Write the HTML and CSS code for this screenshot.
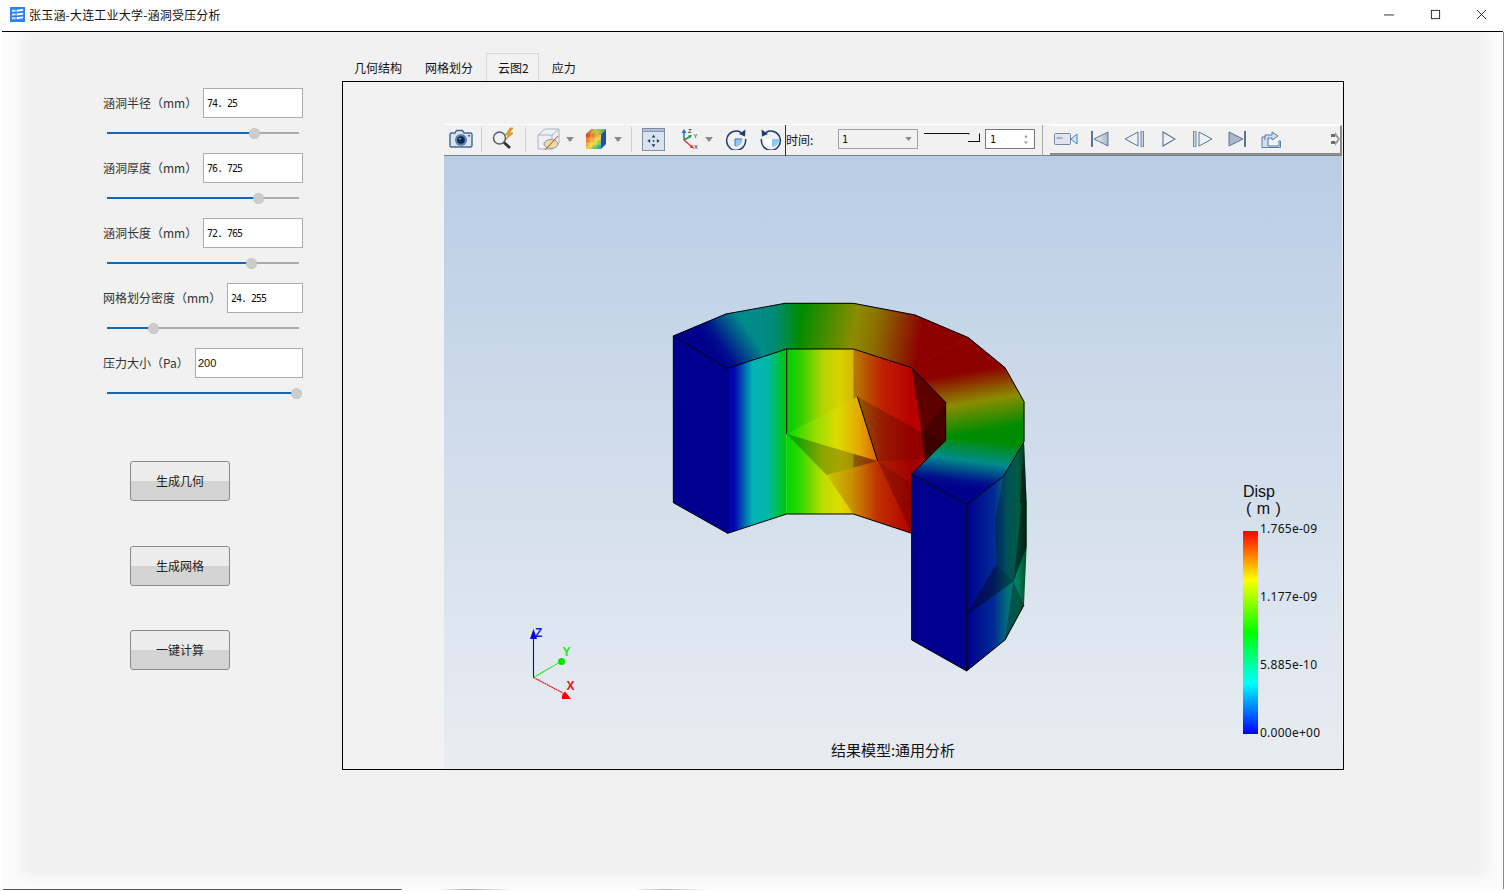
FILE: index.html
```html
<!DOCTYPE html>
<html lang="zh-CN">
<head>
<meta charset="utf-8">
<title>张玉涵-大连工业大学-涵洞受压分析</title>
<link rel="stylesheet" href="styles.css">
</head>
<body>
<div class="window">
  <header class="titlebar">
    <svg class="app-icon" viewBox="0 0 16 16"><rect width="16" height="16" fill="#2f80e8"/><path d="M2 3h4v2H2zM2 7h4v2H2zM2 11h4v2H2z" fill="#cfe3fb"/><path d="M7 3l7-1v2l-7 1zM7 7l7-1v2l-7 1zM7 11l7-1v2l-7 1z" fill="#fff"/></svg>
    <span class="title-text">张玉涵-大连工业大学-涵洞受压分析</span>
    <div class="win-controls">
      <svg class="wc wc-min" viewBox="0 0 12 12"><path d="M0 6.5h11" stroke="#222" fill="none"/></svg>
      <svg class="wc wc-max" viewBox="0 0 12 12"><rect x="1.5" y="1.5" width="9" height="9" stroke="#222" fill="none"/></svg>
      <svg class="wc wc-close" viewBox="0 0 12 12"><path d="M1 1l10 10M11 1L1 11" stroke="#222" fill="none"/></svg>
    </div>
  </header>

  <main class="main">
    <aside class="controls">
      <div class="field">
        <div class="field-row"><label class="field-label">涵洞半径（mm）</label><input class="num w100" value="74. 25"></div>
        <div class="slider"><span class="fill" style="width:147px"></span><span class="knob"></span><span class="rest"></span></div>
      </div>
      <div class="field">
        <div class="field-row"><label class="field-label">涵洞厚度（mm）</label><input class="num w100" value="76. 725"></div>
        <div class="slider"><span class="fill" style="width:151px"></span><span class="knob"></span><span class="rest"></span></div>
      </div>
      <div class="field">
        <div class="field-row"><label class="field-label">涵洞长度（mm）</label><input class="num w100" value="72. 765"></div>
        <div class="slider"><span class="fill" style="width:144px"></span><span class="knob"></span><span class="rest"></span></div>
      </div>
      <div class="field">
        <div class="field-row"><label class="field-label">网格划分密度（mm）</label><input class="num w76" value="24. 255"></div>
        <div class="slider"><span class="fill" style="width:46px"></span><span class="knob"></span><span class="rest"></span></div>
      </div>
      <div class="field">
        <div class="field-row"><label class="field-label">压力大小（Pa）</label><input class="num w108 plain" value="200"></div>
        <div class="slider"><span class="fill" style="width:189px"></span><span class="knob"></span><span class="rest"></span></div>
      </div>
      <div class="actions">
        <button class="btn">生成几何</button>
        <button class="btn">生成网格</button>
        <button class="btn">一键计算</button>
      </div>
    </aside>

    <section class="workspace">
      <nav class="tabs">
        <span class="tab">几何结构</span>
        <span class="tab">网格划分</span>
        <span class="tab active">云图2</span>
        <span class="tab">应力</span>
      </nav>
      <div class="pane">
        <div class="viewer">
          <div class="toolbar">
            <div class="tb-main">
              <svg class="ic i-camera" viewBox="0 0 24 20"><path d="M1 5.500q0-1.500 1.500-1.500H6l1.500-2.500h6L15 4h6.500Q23 4 23 5.500v11q0 1.500-1.500 1.500h-19Q1 18 1 16.500z" fill="#dbe3ee" stroke="#48658f" stroke-width="1.400"/><circle cx="12" cy="11" r="6" fill="#5d7fb0"/><circle cx="12" cy="11" r="3.800" fill="#0e2a55"/><circle cx="10.800" cy="9.800" r="1" fill="#7fa0cf"/><rect x="19" y="6" width="2" height="1.500" fill="#3b557e"/></svg>
              <span class="sep s1"></span>
              <svg class="ic i-zoom" viewBox="0 0 24 24"><path d="M18 1l-4.500 7h3l-2.500 4.500 7-6.500h-3.500l3.500-5z" fill="#eca12b" stroke="#c47a10" stroke-width=".6"/><circle cx="7.500" cy="11" r="6" fill="#eef2f6" stroke="#5a5f66" stroke-width="1.500"/><path d="M12 15.500l6 5.500" stroke="#333" stroke-width="2.800"/></svg>
              <span class="sep s2"></span>
              <svg class="ic i-cube" viewBox="0 0 24 24"><path d="M1 8l7-6h14v14l-7 6H1z" fill="#eef0f4" stroke="#aab4c4"/><path d="M1 8h14v14M15 8l7-6" fill="none" stroke="#aab4c4"/><ellipse cx="14" cy="17" rx="7" ry="4.500" fill="#e8dca8" stroke="#8c96a8"/><path d="M8 23L21 9" stroke="#cf5a2a" stroke-width="1.100"/></svg>
              <svg class="arrow a1" viewBox="0 0 8 5"><path d="M0 0h8L4 5z" fill="#8a8a8a"/></svg>
              <svg class="ic i-colors" viewBox="0 0 22 22"><defs><linearGradient id="cubeFace" x1="1" x2="14" y1="6" y2="21" gradientUnits="userSpaceOnUse"><stop offset="0" stop-color="#d8302a"/><stop offset=".35" stop-color="#f09030"/><stop offset=".6" stop-color="#f0d838"/><stop offset=".85" stop-color="#50c060"/><stop offset="1" stop-color="#30a0d0"/></linearGradient><linearGradient id="cubeTop" x1="1" x2="21" y1="6" y2="2" gradientUnits="userSpaceOnUse"><stop offset="0" stop-color="#c85a30"/><stop offset=".5" stop-color="#c8c040"/><stop offset="1" stop-color="#50b050"/></linearGradient></defs><path d="M21 1v15l-5 5V6z" fill="#1f4fb0"/><path d="M1 6h15v15H1z" fill="url(#cubeFace)"/><path d="M1 6l5-5h15l-5 5z" fill="url(#cubeTop)"/><path d="M6 6v15M11 6v15M1 11h15M1 16h15M6 6l5-5M11 6l5-5" stroke="#f4f0d8" stroke-width=".5" opacity=".7"/></svg>
              <svg class="arrow a2" viewBox="0 0 8 5"><path d="M0 0h8L4 5z" fill="#8a8a8a"/></svg>
              <span class="sep s3"></span>
              <svg class="ic i-fit" viewBox="0 0 24 24"><rect x=".5" y=".5" width="23" height="23" fill="#d9e2ee" stroke="#7b8ba5"/><rect x=".5" y=".5" width="23" height="3" fill="#b3c2d8" stroke="#7b8ba5"/><path d="M12 7l-2 3h4zM12 20l-2-3h4zM5.500 13.500l3-2v4zM18.500 13.500l-3-2v4z" fill="#1f3d6e"/><circle cx="12" cy="13.500" r=".9" fill="#1f3d6e"/></svg>
              <svg class="ic i-axes" viewBox="0 0 22 24"><path d="M5 13V4" stroke="#2a6fc0" stroke-width="1.500"/><path d="M5 2l-2.500 4h5z" fill="#2a6fc0"/><path d="M5 13l7-4" stroke="#1f9a4a" stroke-width="1.500"/><path d="M13 8l-4 .5 1.800 3z" fill="#1f9a4a"/><path d="M5 13l8 7" stroke="#e03a3a" stroke-width="1.500"/><path d="M15 21.500l-4.300-1 2.300-3z" fill="#e03a3a"/><text x="9" y="5.500" class="axt">Z</text><text x="14.500" y="11" class="axt">Y</text><text x="15" y="21.500" class="axt">X</text></svg>
              <svg class="arrow a3" viewBox="0 0 8 5"><path d="M0 0h8L4 5z" fill="#8a8a8a"/></svg>
              <svg class="ic i-rot1" viewBox="0 0 22 22"><path d="M10 11h7.500A8 8 0 0 1 10 19z" fill="#8fc8ef"/><path d="M16 4.500A9.500 9.500 0 1 0 20.500 11" fill="none" stroke="#1f3d6e" stroke-width="1.500"/><path d="M20.500 1.500l-.5 7-6-2.500z" fill="#1f3d6e"/><path d="M10 11h7M10 11v7" stroke="#2f7fc0"/></svg>
              <svg class="ic i-rot2" viewBox="0 0 22 22"><path d="M12 11H4.500A8 8 0 0 0 12 19z" fill="#fff"/><path d="M12 11h7.500A8 8 0 0 1 12 19z" fill="#8fc8ef"/><path d="M6 4.500A9.500 9.500 0 1 1 1.500 11" fill="none" stroke="#1f3d6e" stroke-width="1.500"/><path d="M1.500 1.500l.5 7 6-2.500z" fill="#1f3d6e"/></svg>
              <span class="vline"></span>
              <span class="time-label">时间:</span>
              <div class="combo"><span>1</span><svg class="combo-arrow" viewBox="0 0 8 5"><path d="M0 0h8L4 5z" fill="#8a8a8a"/></svg></div>
              <svg class="tslider" viewBox="0 0 56 12"><path d="M0 3.500h45M45 3.500v1M55.500 3.500v8M44 11.500h12" stroke="#111" fill="none"/></svg>
              <div class="spin"><span>1</span><svg class="spin-arrows" viewBox="0 0 6 11"><path d="M3 1l2 2.500H1zM3 10L1 7.500h4z" fill="#999"/></svg></div>
              <span class="sep s4"></span>
            </div>
            <div class="tb-play">
              <svg class="pi p-video" viewBox="0 0 24 14"><rect x=".5" y="1.500" width="16" height="11" rx="1" fill="#dfe5ee" stroke="#7489a8"/><rect x="2.500" y="5" width="6" height="2" fill="#a4b2c6"/><path d="M17 7l6-5v10z" fill="#d8e4f2" stroke="#3a84c4"/></svg>
              <svg class="pi p-first" viewBox="0 0 18 16"><defs><linearGradient id="ctrlGrad"><stop offset="0" stop-color="#f0f3f7"/><stop offset="1" stop-color="#aab7c9"/></linearGradient></defs><path d="M1 0v16" stroke="#5a7298" stroke-width="2"/><path d="M17 1v14L3 8z" fill="url(#ctrlGrad)" stroke="#5a7298"/></svg>
              <svg class="pi p-prev" viewBox="0 0 20 16"><path d="M14 1v14L1 8z" fill="#eef1f5" stroke="#5a7298"/><path d="M17 0h2.500v16H17z" fill="#c8d2e0" stroke="#5a7298" stroke-width=".8"/></svg>
              <svg class="pi p-play" viewBox="0 0 14 16"><path d="M1 1v14l12-7z" fill="#eef2f7" stroke="#5a7298" stroke-width="1.100"/></svg>
              <svg class="pi p-next" viewBox="0 0 20 16"><path d="M6 1v14l13-7z" fill="#eef1f5" stroke="#5a7298"/><path d="M.5 0H3v16H.5z" fill="#c8d2e0" stroke="#5a7298" stroke-width=".8"/></svg>
              <svg class="pi p-last" viewBox="0 0 18 16"><path d="M1 1v14l14-7z" fill="#aab7c9" stroke="#5a7298"/><path d="M17 0v16" stroke="#5a7298" stroke-width="2"/></svg>
              <svg class="pi p-export" viewBox="0 0 20 17"><path d="M1 6h6v9h11v-5h1.500v6.500H1z" fill="#d4deea" stroke="#5a7bab"/><path d="M4 9V4h7V1l6 4-6 4V7H7v2" fill="#cfdcee" stroke="#5a7bab"/></svg>
              <svg class="handle" viewBox="0 0 9 16"><path d="M0 3h4v3H0zM0 10h4v3H0z" fill="#6f6f6f"/><path d="M4 1l5 7-5 7z" fill="#9a9a9a"/><path d="M4 5l3 3-3 3z" fill="#f1f1f1"/></svg>
            </div>
          </div>

          <div class="scene">
            <svg class="mesh" viewBox="0 0 1140 1170">
              <defs>
                <linearGradient id="t1a" gradientUnits="userSpaceOnUse" x1="150" y1="170" x2="250" y2="100"><stop offset="0" stop-color="#00008c"/><stop offset=".25" stop-color="#00108c"/><stop offset="1" stop-color="#008a8a"/></linearGradient>
                <linearGradient id="t1b" gradientUnits="userSpaceOnUse" x1="300" y1="0" x2="420" y2="0"><stop offset="0" stop-color="#008a8a"/><stop offset=".4" stop-color="#008a70"/><stop offset="1" stop-color="#008c00"/></linearGradient>
                <linearGradient id="t2" gradientUnits="userSpaceOnUse" x1="420" y1="100" x2="780" y2="160"><stop offset="0" stop-color="#008c00"/><stop offset=".45" stop-color="#8c8c00"/><stop offset=".62" stop-color="#8c7000"/><stop offset="1" stop-color="#8c0000"/></linearGradient>
                <linearGradient id="t3" gradientUnits="userSpaceOnUse" x1="960" y1="240" x2="990" y2="420"><stop offset="0" stop-color="#8c0000"/><stop offset=".5" stop-color="#8c8c00"/><stop offset="1" stop-color="#008c00"/></linearGradient>
                <linearGradient id="t4" gradientUnits="userSpaceOnUse" x1="900" y1="440" x2="880" y2="590"><stop offset="0" stop-color="#008c00"/><stop offset=".45" stop-color="#008c8c"/><stop offset=".85" stop-color="#00108c"/><stop offset="1" stop-color="#00008c"/></linearGradient>
                <linearGradient id="w1" gradientUnits="userSpaceOnUse" x1="203" y1="0" x2="380" y2="0"><stop offset="0" stop-color="#0000a8"/><stop offset=".12" stop-color="#0008b0"/><stop offset=".42" stop-color="#00b4b4"/><stop offset=".68" stop-color="#00b8a8"/><stop offset="1" stop-color="#00c800"/></linearGradient>
                <linearGradient id="w2" gradientUnits="userSpaceOnUse" x1="380" y1="0" x2="580" y2="0"><stop offset="0" stop-color="#00d800"/><stop offset=".2" stop-color="#30d800"/><stop offset=".55" stop-color="#c0dc00"/><stop offset=".8" stop-color="#e0dc00"/><stop offset="1" stop-color="#e0c000"/></linearGradient>
                <linearGradient id="w3" gradientUnits="userSpaceOnUse" x1="580" y1="0" x2="755" y2="0"><stop offset="0" stop-color="#b88000"/><stop offset=".2" stop-color="#b85800"/><stop offset=".5" stop-color="#c02000"/><stop offset="1" stop-color="#b80000"/></linearGradient>
                <linearGradient id="w4" gradientUnits="userSpaceOnUse" x1="380" y1="0" x2="653" y2="0"><stop offset="0" stop-color="#00d800"/><stop offset=".3" stop-color="#90dc00"/><stop offset=".55" stop-color="#dcdc00"/><stop offset=".8" stop-color="#e4a800"/><stop offset="1" stop-color="#e06000"/></linearGradient>
                <linearGradient id="w5" gradientUnits="userSpaceOnUse" x1="500" y1="0" x2="755" y2="0"><stop offset="0" stop-color="#c8c800"/><stop offset=".3" stop-color="#c89000"/><stop offset=".6" stop-color="#c03000"/><stop offset="1" stop-color="#b00000"/></linearGradient>
                <linearGradient id="o1" gradientUnits="userSpaceOnUse" x1="920" y1="0" x2="1100" y2="0"><stop offset="0" stop-color="#000090"/><stop offset=".45" stop-color="#002a94"/><stop offset=".68" stop-color="#007078"/><stop offset=".85" stop-color="#008060"/><stop offset="1" stop-color="#005020"/></linearGradient>
              </defs>
              <path d="M40 138L198 72L300 55L310 200L203 235z" fill="url(#t1a)" stroke="url(#t1a)" stroke-width="2"/>
              <path d="M300 55L375 40H420V177H380L310 200z" fill="url(#t1b)" stroke="url(#t1b)" stroke-width="2"/>
              <path d="M420 40H580L765 75L925 143L755 233L580 177H420z" fill="url(#t2)" stroke="url(#t2)" stroke-width="2"/>
              <path d="M925 143L1035 233L1092 335V455L857 452V337L755 233z" fill="url(#t3)" stroke="url(#t3)" stroke-width="2"/>
              <path d="M1092 452L1030 560L920 645L755 552L857 452z" fill="url(#t4)"/>

              <path d="M203 235L380 177V672L203 730z" fill="url(#w1)"/>
              <path d="M380 177H580V672H380z" fill="url(#w2)"/>
              <path d="M580 177L755 233L857 337V452L755 552V730L580 672z" fill="url(#w3)"/>

              <path d="M380 432L592 320L653 513z" fill="url(#w4)"/>
              <path d="M500 555L653 513L755 730L580 672z" fill="url(#w5)"/>
              <path d="M380 177H580L592 320L380 432z" fill="#000" opacity=".04"/>
              <path d="M380 432L653 513L500 555z" fill="#000" opacity=".25"/>
              <path d="M592 320L785 427L795 510L653 513z" fill="#000" opacity=".2"/>
              <path d="M653 513L795 510L755 552L755 580z" fill="#000" opacity=".1"/>
              <path d="M653 513L755 580V730z" fill="#000" opacity=".22"/>
              <path d="M755 233L857 337L785 427z" fill="#000" opacity=".5"/>
              <path d="M857 337V452L785 427z" fill="#000" opacity=".62"/>
              <path d="M857 452L795 510L785 427z" fill="#000" opacity=".68"/>

              <path d="M40 138L203 235V730L40 638z" fill="#00008f"/>
              <path d="M755 552L920 645V1143L755 1050z" fill="#00008f"/>

              <path d="M920 645L1030 560L1092 455L1100 640V770L1092 945L1035 1050L920 1143z" fill="url(#o1)"/>
              <path d="M1030 560L1092 455L1085 640L1060 875L1010 820L1005 690z" fill="#000" opacity=".28"/>
              <path d="M920 975L1010 820L1060 875z" fill="#000" opacity=".38"/>
              <path d="M1060 875L1092 945L1035 1050z" fill="#000" opacity=".3"/>
              <path d="M1085 640L1100 640V770L1060 875z" fill="#000" opacity=".55"/>
              <path d="M1092 455L1100 640H1080z" fill="#000" opacity=".55"/>

              <g fill="none" stroke="#000" stroke-width="3" stroke-linejoin="round">
                <path d="M40 138L198 72L375 40H580L765 75L925 143L1035 233L1092 335V455"/>
                <path d="M40 138L203 235L380 177H580L755 233L857 337V452L755 552L920 645L1030 560L1092 455"/>
                <path d="M40 138V638L203 730V235"/>
                <path d="M203 730L380 672H580L755 730"/>
                <path d="M380 177V432M592 320L653 513"/>
                <path d="M755 552V1050L920 1143V645"/>
                <path d="M920 1143L1035 1050L1092 945"/>
              </g>
            </svg>

            <svg class="triad" viewBox="0 0 90 90">
              <path d="M23.500 57.500V15" stroke="#0000e6" stroke-width="1.100"/>
              <path d="M23.500 9l-3.500 10h7z" fill="#0000e6"/>
              <path d="M23.500 57.500L50 42" stroke="#00e600" stroke-width="1.100" stroke-dasharray="2 .5"/>
              <circle cx="51.500" cy="41.500" r="3.500" fill="#00e600"/>
              <path d="M23.500 57.500L53 73" stroke="#f00000" stroke-width="1.100" stroke-dasharray="2 .5"/>
              <path d="M55 71.500q2 2 6 7.500h-9q-1-4 3-7.500z" fill="#f00000"/>
              <text x="25" y="17" class="tz">Z</text>
              <text x="52.500" y="36" class="ty">Y</text>
              <text x="56.500" y="70" class="tx">X</text>
            </svg>

            <div class="legend">
              <div class="legend-title">Disp</div>
              <div class="legend-unit">( m )</div>
              <div class="legend-body">
                <div class="legend-bar"></div>
                <div class="legend-labels">
                  <span>1.765e-09</span>
                  <span>1.177e-09</span>
                  <span>5.885e-10</span>
                  <span>0.000e+00</span>
                </div>
              </div>
            </div>

            <div class="caption">结果模型:通用分析</div>
          </div>
        </div>
      </div>
    </section>
  </main>
  <div class="edge-bottom"></div>
</div>
</body>
</html>
```

FILE: styles.css
```css
* { box-sizing: border-box; }

html, body {
  margin: 0;
  padding: 0;
  width: 100%;
  height: 100%;
  overflow: hidden;
}

body {
  background: #fff;
  font-family: "Noto Sans CJK SC", "Liberation Sans", sans-serif;
  font-size: 12px;
  color: #111;
}

.window {
  width: 1505px;
  height: 891px;
  display: flex;
  flex-direction: column;
  position: relative;
}

/* Title bar */
.titlebar {
  height: 32px;
  flex: none;
  display: flex;
  align-items: center;
  padding: 0 16px 2px 8px;
  margin: 0 2px 0 2px;
  border-bottom: 1px solid #000;
  background: #fff;
}
.app-icon { width: 15px; height: 15px; flex: none; }
.title-text { margin-left: 4px; font-size: 12px; letter-spacing: .2px; color: #111; line-height: 16px; }
.win-controls { margin-left: auto; display: flex; align-items: center; gap: 35px; }
.wc { width: 11px; height: 11px; display: block; }

/* Main */
.main {
  flex: 1;
  display: flex;
  background: #f1f1f1;
  margin: 0 1px 2px 2px;
  border-right: 1px solid #888;
  box-shadow:
    inset 26px 0 12px -6px #fbfbfb,
    inset -22px 0 12px -6px #fbfbfb,
    inset 0 -16px 10px -4px #fbfbfb;
}

.controls {
  width: 340px;
  flex: none;
  padding: 56px 39px 0 101px;
  display: flex;
  flex-direction: column;
}

.field { height: 65px; }
.field-row {
  height: 30px;
  display: flex;
  align-items: center;
  justify-content: space-between;
}
.field-label { font-size: 12px; color: #333; white-space: nowrap; margin-top: -2px; }

.num {
  height: 30px;
  border: 1px solid #acacac;
  background: #fff;
  padding: 0 3px;
  font-family: "DejaVu Sans Mono", monospace;
  font-size: 10px;
  letter-spacing: -1px;
  color: #111;
  outline: none;
  border-radius: 0;
}
.num.plain { font-family: "Liberation Sans", sans-serif; font-size: 11px; letter-spacing: 0; padding: 0 2px; }
.w100 { width: 100px; }
.w76 { width: 76px; }
.w108 { width: 108px; }

.slider {
  margin: 8px 4px 0 4px;
  height: 14px;
  display: flex;
  align-items: center;
}
.fill { height: 2px; background: #1068bd; flex: none; }
.rest { height: 2px; background: #ababab; flex: 1; }
.knob {
  width: 11px;
  height: 11px;
  flex: none;
  margin: 0 -5.5px;
  border-radius: 50%;
  background: #cdcdcd;
  border: 1px dotted #bdbdbd;
  position: relative;
}

.actions {
  margin: 48px 0 0 27px;
  display: flex;
  flex-direction: column;
  align-items: flex-start;
}
.btn {
  width: 100px;
  height: 40px;
  border: 1px solid #8a8a8a;
  border-radius: 3px;
  background: linear-gradient(#ececec 0, #ececec 50%, #d4d4d4 50%, #d4d4d4 100%);
  font-family: "Noto Sans CJK SC", sans-serif;
  font-size: 12px;
  color: #222;
  padding: 0 0 2px;
}
.btn + .btn { margin-top: 45px; }
.btn:last-child { margin-top: 44px; }

/* Workspace */
.workspace {
  flex: none;
  width: 1002px;
  padding-top: 21px;
  display: flex;
  flex-direction: column;
}

.tabs { display: flex; height: 28px; position: relative; }
.tab {
  height: 28px;
  line-height: 28px;
  padding: 0 11px;
  font-size: 12px;
  color: #111;
  white-space: nowrap;
  border: 1px solid transparent;
  border-bottom: 0;
  margin-right: -1px;
}
.tab.active {
  background: #f2f2f2;
  border-color: #d9d9d9;
  margin: 0 1px 0 2px;
  padding: 0 9px 0 11px;
}

.pane {
  height: 689px;
  border: 1px solid #000;
  background: #f2f2f2;
  padding: 42px 1px 0 101px;
}

.viewer {
  height: 645px;
  display: flex;
  flex-direction: column;
}

/* Toolbar */
.toolbar {
  height: 32px;
  flex: none;
  display: flex;
  background: #f1f1f1;
  border-top: 1px solid #fff;
  border-bottom: 1px solid #808080;
}
.tb-main { width: 606px; display: flex; align-items: center; flex: none; padding: 0 0 2px 5px; }
.tb-play {
  flex: 1;
  height: 30px;
  display: flex;
  align-items: center;
  background: #f1f1f1;
  border-top: 1px solid #fff;
  border-bottom: 2px solid #8c8c8c;
  border-right: 2px solid #8c8c8c;
  padding: 0 0 1px 4px;
}

.ic { flex: none; display: block; }
.sep { width: 1px; height: 25px; background: #cfcfcf; flex: none; }
.arrow { width: 8px; height: 5px; flex: none; }
.axt { font: 6px "Liberation Sans", sans-serif; fill: #222; }

.i-camera { width: 24px; height: 20px; }
.s1 { margin-left: 8px; }
.i-zoom { width: 24px; height: 24px; margin-left: 10px; }
.s2 { margin-left: 9px; }
.i-cube { width: 24px; height: 24px; margin-left: 11px; }
.a1 { margin-left: 5px; }
.i-colors { width: 22px; height: 22px; margin-left: 11px; }
.a2 { margin-left: 7px; }
.s3 { margin-left: 9px; }
.i-fit { width: 23px; height: 23px; margin-left: 10px; }
.i-axes { width: 22px; height: 24px; margin-left: 14px; }
.a3 { margin-left: 4px; }
.i-rot1 { width: 22px; height: 22px; margin-left: 12px; }
.i-rot2 { width: 22px; height: 22px; margin-left: 13px; }
.vline { width: 1px; height: 31px; background: #333; margin: 2px 0 0 3px; flex: none; }
.time-label { font-size: 12px; width: 52px; flex: none; color: #111; }

.combo {
  width: 80px;
  height: 20px;
  flex: none;
  border: 1px solid #a0a0a0;
  display: flex;
  align-items: center;
  justify-content: space-between;
  padding: 0 5px 0 3px;
  font: 10px "DejaVu Sans Mono", monospace;
}
.combo-arrow { width: 7px; height: 4px; }
.tslider { width: 56px; height: 12px; flex: none; margin: -6px 0 0 6px; }
.spin {
  width: 50px;
  height: 20px;
  flex: none;
  margin-left: 5px;
  border: 1px solid #777;
  background: #fff;
  display: flex;
  align-items: center;
  justify-content: space-between;
  padding: 0 5px 0 4px;
  font: 10px "DejaVu Sans Mono", monospace;
}
.spin-arrows { width: 6px; height: 11px; }
.s4 { margin: 2px 0 0 7px; height: 31px; background: #a8a8a8; }

.pi { flex: none; display: block; }
.p-video { width: 24px; height: 14px; }
.p-first { width: 18px; height: 16px; margin-left: 13px; }
.p-prev { width: 20px; height: 16px; margin-left: 15px; }
.p-play { width: 14px; height: 16px; margin-left: 18px; }
.p-next { width: 20px; height: 16px; margin-left: 17px; }
.p-last { width: 18px; height: 16px; margin-left: 15px; }
.p-export { width: 20px; height: 17px; margin-left: 15px; }
.handle { width: 9px; height: 16px; margin-left: auto; }

/* 3D scene */
.scene {
  flex: 1;
  position: relative;
  background: linear-gradient(#b9cde5, #e9edf2);
  overflow: hidden;
}
.mesh {
  position: absolute;
  left: 216px;
  top: 134px;
  width: 380px;
  height: 390px;
}
.triad {
  position: absolute;
  left: 66px;
  top: 464px;
  width: 90px;
  height: 90px;
}
.tz, .ty, .tx { font: bold 12px "Liberation Sans", sans-serif; }
.tz { fill: #1a1ae6; }
.ty { fill: #1ee61e; }
.tx { fill: #f01010; }

.legend {
  position: absolute;
  left: 799px;
  top: 327px;
  width: 90px;
  color: #111;
}
.legend-title { font: 16px/18px "Liberation Sans", sans-serif; }
.legend-unit { font: 16px/16px "Liberation Sans", sans-serif; margin-left: 3px; word-spacing: 1px; }
.legend-body { display: flex; margin-top: 14px; height: 203px; }
.legend-bar {
  width: 15px;
  height: 203px;
  flex: none;
  background: linear-gradient(#ff0000 0, #ffff00 24%, #00ff00 50%, #00ffff 75%, #0000ff 100%);
}
.legend-labels {
  display: flex;
  flex-direction: column;
  justify-content: space-between;
  height: 220px;
  margin: -10px 0 0 2px;
  font: 12px/16px "Noto Sans", "Liberation Sans", sans-serif;
  letter-spacing: .25px;
  white-space: nowrap;
}

.caption {
  position: absolute;
  left: 0;
  right: 0;
  bottom: 9px;
  text-align: center;
  font-size: 15px;
  line-height: 20px;
  color: #111;
}

.edge-bottom {
  position: absolute;
  left: 3px;
  right: 0;
  bottom: 1px;
  height: 1px;
  background: linear-gradient(90deg, #555 0, #555 26.500%, transparent 26.600%, transparent 29%, #aaa 31%, transparent 34%, transparent 42%, #bbb 44%, transparent 47%);
}
```
